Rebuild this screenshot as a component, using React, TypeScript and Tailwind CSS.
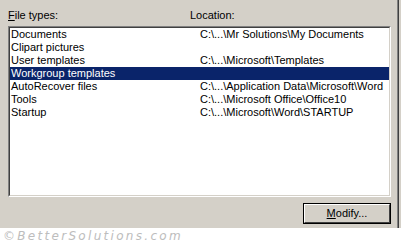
import React from "react";

// Rows of the file locations list
const rows = [
    { type: "Documents", location: "C:\\...\\Mr Solutions\\My Documents" },
    { type: "Clipart pictures", location: "" },
    { type: "User templates", location: "C:\\...\\Microsoft\\Templates" },
    { type: "Workgroup templates", location: "", selected: true },
    { type: "AutoRecover files", location: "C:\\...\\Application Data\\Microsoft\\Word" },
    { type: "Tools", location: "C:\\...\\Microsoft Office\\Office10" },
    { type: "Startup", location: "C:\\...\\Microsoft\\Word\\STARTUP" },
];

const App = () => {
    return (
        <div className="w-[401px] h-[243px] bg-white flex flex-col overflow-hidden text-[11px] leading-[13px] text-black" style={{ fontFamily: '"Liberation Sans", Arial, sans-serif' }}>

            {/* Dialog body */}
            <div className="h-[228px] flex bg-[#d4d0c8]">
                <div className="w-[397px] flex flex-col pl-[8px] pr-[6px] pt-[9px]">

                    {/* Column labels */}
                    <div className="flex h-[13px]">
                        <span className="w-[182px]"><span className="underline">F</span>ile types:</span>
                        <span>Location:</span>
                    </div>

                    {/* List box, sunken border */}
                    <div className="mt-[4px] h-[171px] border border-t-[#808080] border-l-[#808080] border-r-white border-b-white">
                        <div className="h-full border border-t-[#404040] border-l-[#404040] border-r-[#d4d0c8] border-b-[#d4d0c8] bg-white flex flex-col">
                            {rows.map((row) => (
                                <div key={row.type} className={`flex h-[13px] ${row.selected ? "bg-[#0a246a] text-white" : ""}`}>
                                    <span className="w-[190px] pl-[1px] whitespace-nowrap">{row.type}</span>
                                    <span className="whitespace-nowrap">{row.location}</span>
                                </div>
                            ))}
                        </div>
                    </div>

                    {/* Modify button */}
                    <div className="flex justify-end mt-[6px]">
                        <button className="w-[88px] h-[21px] border border-black p-0 bg-[#d4d0c8]">
                            <div className="h-full border border-t-white border-l-white border-r-[#404040] border-b-[#404040] flex items-center justify-center">
                                <span><span className="underline">M</span>odify...</span>
                            </div>
                        </button>
                    </div>
                </div>

                {/* Window edge */}
                <div className="w-[1px] bg-[#808080]" />
                <div className="w-[1px] bg-[#404040]" />
                <div className="flex-1 bg-[#d4d0c8]" />
            </div>

            {/* Watermark */}
            <div className="pl-[3px] pt-[2px] text-[#bdbdbd] italic text-[12px] leading-[13px] tracking-[2.3px]" style={{ fontFamily: '"DejaVu Sans", sans-serif' }}>
                ©BetterSolutions.com
            </div>
        </div>
    );
};

export default App;
